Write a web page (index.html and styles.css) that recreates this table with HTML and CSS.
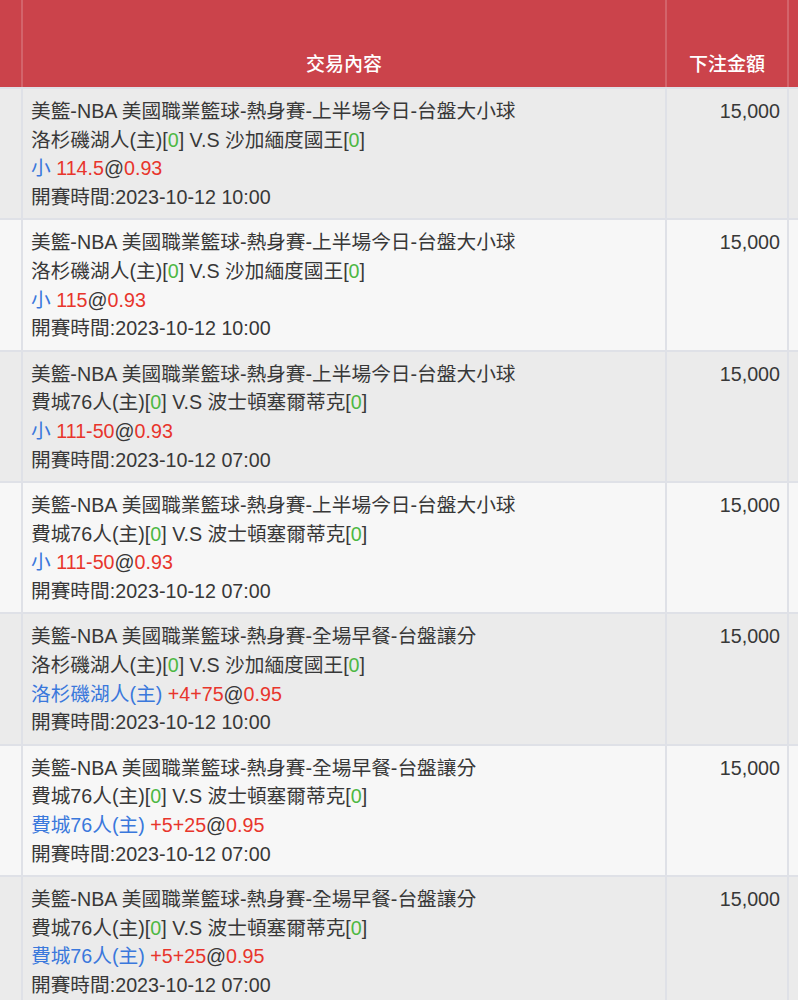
FILE: index.html
```html
<!DOCTYPE html>
<html lang="zh-Hant">
<head>
<meta charset="utf-8">
<title>交易內容</title>
<link rel="stylesheet" href="styles.css">
</head>
<body>
<div class="table">
  <div class="row head">
    <div class="cell c0"></div>
    <div class="cell c1">交易內容</div>
    <div class="cell c2">下注金額</div>
    <div class="cell c3"></div>
  </div>

  <div class="row odd">
    <div class="cell c0"></div>
    <div class="cell c1">
      <div>美籃-NBA 美國職業籃球-熱身賽-上半場今日-台盤大小球</div>
      <div>洛杉磯湖人(主)[<span class="g">0</span>] V.S 沙加緬度國王[<span class="g">0</span>]</div>
      <div><span class="b">小</span> <span class="r">114.5</span>@<span class="r">0.93</span></div>
      <div>開賽時間:2023-10-12 10:00</div>
    </div>
    <div class="cell c2">15,000</div>
    <div class="cell c3"></div>
  </div>

  <div class="row even">
    <div class="cell c0"></div>
    <div class="cell c1">
      <div>美籃-NBA 美國職業籃球-熱身賽-上半場今日-台盤大小球</div>
      <div>洛杉磯湖人(主)[<span class="g">0</span>] V.S 沙加緬度國王[<span class="g">0</span>]</div>
      <div><span class="b">小</span> <span class="r">115</span>@<span class="r">0.93</span></div>
      <div>開賽時間:2023-10-12 10:00</div>
    </div>
    <div class="cell c2">15,000</div>
    <div class="cell c3"></div>
  </div>

  <div class="row odd">
    <div class="cell c0"></div>
    <div class="cell c1">
      <div>美籃-NBA 美國職業籃球-熱身賽-上半場今日-台盤大小球</div>
      <div>費城76人(主)[<span class="g">0</span>] V.S 波士頓塞爾蒂克[<span class="g">0</span>]</div>
      <div><span class="b">小</span> <span class="r">111-50</span>@<span class="r">0.93</span></div>
      <div>開賽時間:2023-10-12 07:00</div>
    </div>
    <div class="cell c2">15,000</div>
    <div class="cell c3"></div>
  </div>

  <div class="row even">
    <div class="cell c0"></div>
    <div class="cell c1">
      <div>美籃-NBA 美國職業籃球-熱身賽-上半場今日-台盤大小球</div>
      <div>費城76人(主)[<span class="g">0</span>] V.S 波士頓塞爾蒂克[<span class="g">0</span>]</div>
      <div><span class="b">小</span> <span class="r">111-50</span>@<span class="r">0.93</span></div>
      <div>開賽時間:2023-10-12 07:00</div>
    </div>
    <div class="cell c2">15,000</div>
    <div class="cell c3"></div>
  </div>

  <div class="row odd">
    <div class="cell c0"></div>
    <div class="cell c1">
      <div>美籃-NBA 美國職業籃球-熱身賽-全場早餐-台盤讓分</div>
      <div>洛杉磯湖人(主)[<span class="g">0</span>] V.S 沙加緬度國王[<span class="g">0</span>]</div>
      <div><span class="b">洛杉磯湖人(主)</span> <span class="r">+4+75</span>@<span class="r">0.95</span></div>
      <div>開賽時間:2023-10-12 10:00</div>
    </div>
    <div class="cell c2">15,000</div>
    <div class="cell c3"></div>
  </div>

  <div class="row even">
    <div class="cell c0"></div>
    <div class="cell c1">
      <div>美籃-NBA 美國職業籃球-熱身賽-全場早餐-台盤讓分</div>
      <div>費城76人(主)[<span class="g">0</span>] V.S 波士頓塞爾蒂克[<span class="g">0</span>]</div>
      <div><span class="b">費城76人(主)</span> <span class="r">+5+25</span>@<span class="r">0.95</span></div>
      <div>開賽時間:2023-10-12 07:00</div>
    </div>
    <div class="cell c2">15,000</div>
    <div class="cell c3"></div>
  </div>

  <div class="row odd">
    <div class="cell c0"></div>
    <div class="cell c1">
      <div>美籃-NBA 美國職業籃球-熱身賽-全場早餐-台盤讓分</div>
      <div>費城76人(主)[<span class="g">0</span>] V.S 波士頓塞爾蒂克[<span class="g">0</span>]</div>
      <div><span class="b">費城76人(主)</span> <span class="r">+5+25</span>@<span class="r">0.95</span></div>
      <div>開賽時間:2023-10-12 07:00</div>
    </div>
    <div class="cell c2">15,000</div>
    <div class="cell c3"></div>
  </div>
</div>
</body>
</html>
```

FILE: styles.css
```css
html, body {
  margin: 0;
  padding: 0;
  background: #f7f7f7;
  overflow: hidden;
}
body {
  width: 798px;
  height: 1000px;
  font-family: "Liberation Sans", "Noto Sans CJK TC", sans-serif;
  font-size: 19.7px;
  color: #383838;
}
.table {
  display: flex;
  flex-direction: column;
}
.row {
  display: grid;
  grid-template-columns: 23px 644px 122px 1fr;
  border-bottom: 2px solid #dfe1e7;
}
.cell {
  box-sizing: border-box;
  border-right: 2px solid #dfe1e7;
}
.cell.c3 {
  border-right: none;
}
.odd { background: #ebebeb; }
.even { background: #f7f7f7; }

.head {
  height: 87px;
  background: #cb434b;
}
.head .cell {
  border-right-color: #d3646b;
  display: flex;
  align-items: flex-end;
  justify-content: center;
  color: #ffffff;
  font-weight: 500;
  font-size: 19px;
  line-height: 28px;
  padding-bottom: 8px;
}
.head .c3 { border-right: none; }

.row:not(.head) .c1 {
  padding: 8px 8px 6.5px 8px;
  line-height: 28.7px;
  white-space: nowrap;
}
.row:not(.head) .c2 {
  padding: 8px 7px 0 0;
  line-height: 28.7px;
  text-align: right;
}
.g { color: #4db843; }
.b { color: #3a78dc; }
.r { color: #e8352c; }
```
